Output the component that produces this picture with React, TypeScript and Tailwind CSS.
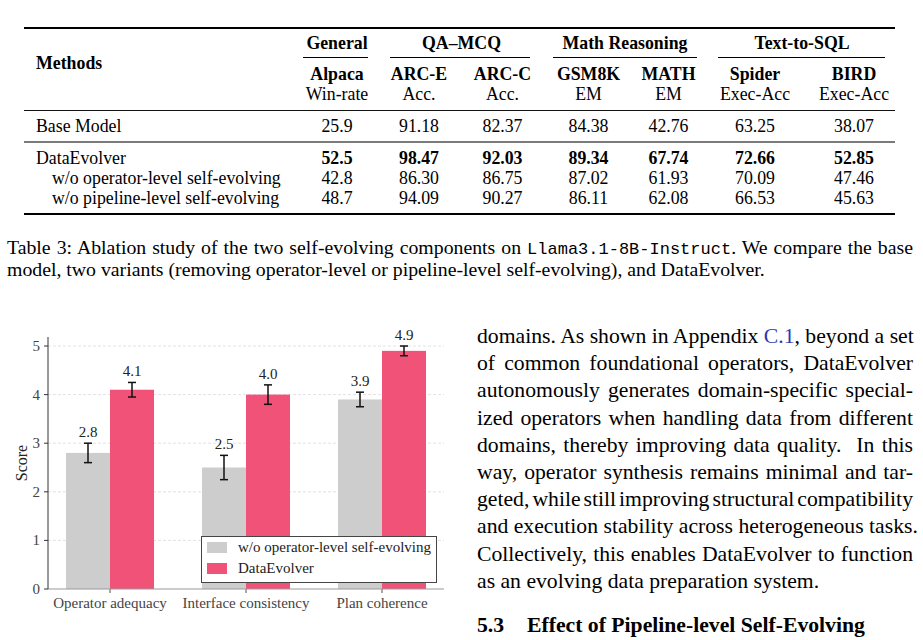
const COLS = "grid grid-cols-[272px_82px_82px_85px_87px_73px_100px_90px]";

const rows = [
  { name: "DataEvolver", indent: false, bold: true, vals: ["52.5", "98.47", "92.03", "89.34", "67.74", "72.66", "52.85"] },
  { name: "w/o operator-level self-evolving", indent: true, bold: false, vals: ["42.8", "86.30", "86.75", "87.02", "61.93", "70.09", "47.46"] },
  { name: "w/o pipeline-level self-evolving", indent: true, bold: false, vals: ["48.7", "94.09", "90.27", "86.11", "62.08", "66.53", "45.63"] },
];

const subHeads = [
  ["Alpaca", "Win-rate"],
  ["ARC-E", "Acc."],
  ["ARC-C", "Acc."],
  ["GSM8K", "EM"],
  ["MATH", "EM"],
  ["Spider", "Exec-Acc"],
  ["BIRD", "Exec-Acc"],
];

const AblationTable = () => {
  return (
    <div className="ml-[24px] w-[871px] pt-[27px] text-[17.8px] leading-[20px] text-black">
      <div className="h-[2px] bg-black" />
      <div className={COLS}>
        <div className="row-span-2 pl-[12px] pt-[24px] font-bold">Methods</div>
        <div className="h-[29px] flex flex-col justify-between pt-[4px]">
          <div className="text-center font-bold">General</div>
          <div className="h-px bg-black ml-[7px] mr-[10px]" />
        </div>
        <div className="col-span-2 h-[29px] flex flex-col justify-between pt-[4px]">
          <div className="text-center font-bold">QA–MCQ</div>
          <div className="h-px bg-black ml-[12px] mr-[15px]" />
        </div>
        <div className="col-span-2 h-[29px] flex flex-col justify-between pt-[4px]">
          <div className="text-center font-bold">Math Reasoning</div>
          <div className="h-px bg-black ml-[8px] mr-[8px]" />
        </div>
        <div className="col-span-2 h-[29px] flex flex-col justify-between pt-[4px]">
          <div className="text-center font-bold pl-[4px]">Text-to-SQL</div>
          <div className="h-px bg-black ml-[13px] mr-[10px]" />
        </div>
        {subHeads.map(([a, b], i) => (
          <div key={a} className={`h-[52px] pt-[6px] text-center ${i === 6 ? "pl-[8px]" : ""}`}>
            <div className="font-bold">{a}</div>
            <div>{b}</div>
          </div>
        ))}
      </div>
      <div className="h-px bg-[#111]" />
      <div className={`${COLS} py-[5px]`}>
        <div className="pl-[12px]">Base Model</div>
        {["25.9", "91.18", "82.37", "84.38", "42.76", "63.25", "38.07"].map((v, i) => (
          <div key={i} className={`text-center ${i === 6 ? "pl-[8px]" : ""}`}>{v}</div>
        ))}
      </div>
      <div className="h-[2px] bg-[#7a7a7a]" />
      <div className="pt-[5px] pb-[5px]">
        {rows.map((r) => (
          <div key={r.name} className={COLS}>
            <div className={r.indent ? "pl-[28px]" : "pl-[12px]"}>{r.name}</div>
            {r.vals.map((v, i) => (
              <div key={i} className={`text-center ${r.bold ? "font-bold" : ""} ${i === 6 ? "pl-[8px]" : ""}`}>{v}</div>
            ))}
          </div>
        ))}
      </div>
      <div className="h-[2px] bg-black" />
    </div>
  );
};

const Caption = () => (
  <div className="ml-[7px] w-[906px] mt-[21px] text-[19.8px] leading-[22px] text-black">
    <div className="h-[22px] whitespace-nowrap text-justify [text-align-last:justify]">
      Table 3: Ablation study of the two self-evolving components on{" "}
      <span className="[font-family:'Liberation_Mono',monospace] text-[17px]">Llama3.1-8B-Instruct</span>. We compare the base
    </div>
    <div className="h-[22px] whitespace-nowrap">
      model, two variants (removing operator-level or pipeline-level self-evolving), and DataEvolver.
    </div>
  </div>
);

const Y0 = 589;
const U = 48.6;
const yv = (v: number) => Y0 - v * U;

const groups = [
  { label: "Operator adequacy", cx: 110, g: 2.8, ge: 0.2, p: 4.1, pe: 0.15 },
  { label: "Interface consistency", cx: 246, g: 2.5, ge: 0.25, p: 4.0, pe: 0.2 },
  { label: "Plan coherence", cx: 382, g: 3.9, ge: 0.15, p: 4.9, pe: 0.1 },
];

const ErrBar = ({ x, v, e }: { x: number; v: number; e: number }) => (
  <g stroke="#111" strokeWidth={1.5}>
    <line x1={x} x2={x} y1={yv(v + e)} y2={yv(v - e)} />
    <line x1={x - 4} x2={x + 4} y1={yv(v + e)} y2={yv(v + e)} />
    <line x1={x - 4} x2={x + 4} y1={yv(v - e)} y2={yv(v - e)} />
  </g>
);

const ScoreChart = () => (
  <svg width={460} height={317} viewBox="0 323 460 317" className="block shrink-0 [font-family:'Liberation_Serif',serif]">
    {[1, 2, 3, 4, 5].map((t) => (
      <line key={t} x1={48} x2={444} y1={yv(t)} y2={yv(t)} stroke="#e2e2e2" strokeWidth={1} strokeDasharray="3 2" />
    ))}
    {groups.map((g) => (
      <g key={g.label}>
        <rect x={g.cx - 44} y={yv(g.g)} width={44} height={Y0 - yv(g.g)} fill="#cdcdcd" />
        <rect x={g.cx} y={yv(g.p)} width={44} height={Y0 - yv(g.p)} fill="#f05278" />
        <ErrBar x={g.cx - 22} v={g.g} e={g.ge} />
        <ErrBar x={g.cx + 22} v={g.p} e={g.pe} />
        <text x={g.cx - 22} y={yv(g.g + g.ge) - 6} textAnchor="middle" fontSize={15} fill="#222">
          {g.g.toFixed(1)}
        </text>
        <text x={g.cx + 22} y={yv(g.p + g.pe) - 6} textAnchor="middle" fontSize={15} fill="#222">
          {g.p.toFixed(1)}
        </text>
        <line x1={g.cx} x2={g.cx} y1={Y0} y2={Y0 + 4} stroke="#555" strokeWidth={1} />
        <text x={g.cx} y={608} textAnchor="middle" fontSize={15} fill="#444">
          {g.label}
        </text>
      </g>
    ))}
    <line x1={48} x2={444} y1={Y0} y2={Y0} stroke="#999" strokeWidth={1.2} />
    <line x1={48} x2={48} y1={337} y2={Y0} stroke="#333" strokeWidth={1} />
    {[0, 1, 2, 3, 4, 5].map((t) => (
      <g key={t}>
        <line x1={44} x2={48} y1={yv(t)} y2={yv(t)} stroke="#333" strokeWidth={1} />
        <text x={40} y={yv(t) + 5} textAnchor="end" fontSize={15} fill="#444">
          {t}
        </text>
      </g>
    ))}
    <text x={21} y={463} transform="rotate(-90 21 463)" textAnchor="middle" dominantBaseline="central" fontSize={16} fill="#222">
      Score
    </text>
    <rect x={201.5} y={536.5} width={235} height={46} fill="white" stroke="#444" strokeWidth={1} />
    <rect x={207} y={542} width={20} height={11} fill="#cdcdcd" />
    <rect x={207} y={563} width={20} height={11} fill="#f05278" />
    <text x={238} y={552} fontSize={15} fill="#222">w/o operator-level self-evolving</text>
    <text x={238} y={573} fontSize={15} fill="#222">DataEvolver</text>
  </svg>
);

const lines: { text: React.ReactNode; last?: boolean; ws?: string }[] = [
  {
    text: (
      <>
        domains. As shown in Appendix <span className="text-[#2a3bb0]">C.1</span>, beyond a set
      </>
    ),
  },
  { text: "of common foundational operators, DataEvolver" },
  { text: "autonomously generates domain-specific special-" },
  { text: "ized operators when handling data from different" },
  { text: "domains, thereby improving data quality.  In this" },
  { text: "way, operator synthesis remains minimal and tar-" },
  { text: "geted, while still improving structural compatibility", ws: "[word-spacing:-3px]" },
  { text: "and execution stability across heterogeneous tasks." },
  { text: "Collectively, this enables DataEvolver to function" },
  { text: "as an evolving data preparation system.", last: true },
];

const BodyText = () => (
  <div className="ml-[17px] w-[436px] text-[21.7px] leading-[27.2px] text-black">
    {lines.map((l, i) => (
      <div
        key={i}
        className={`whitespace-pre ${l.last ? "" : "text-justify [text-align-last:justify]"} ${l.ws ?? ""}`}
      >
        {l.text}
      </div>
    ))}
    <div className="mt-[17px] flex font-bold whitespace-nowrap">
      <span className="w-[50px]">5.3</span>
      <span>Effect of Pipeline-level Self-Evolving</span>
    </div>
  </div>
);

export default function App() {
  return (
    <div className="w-[923px] h-[640px] overflow-hidden bg-white [font-family:'Liberation_Serif',serif]">
      <AblationTable />
      <Caption />
      <div className="mt-[43px] flex">
        <ScoreChart />
        <BodyText />
      </div>
    </div>
  );
}
